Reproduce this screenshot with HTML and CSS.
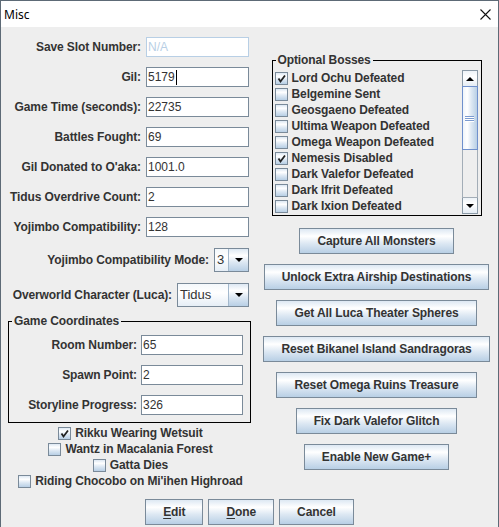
FILE: index.html
```html
<!DOCTYPE html>
<html>
<head>
<meta charset="utf-8">
<title>Misc</title>
<link rel="stylesheet" href="styles.css">
</head>
<body>
<div class="window">
  <div class="titlebar">
    <span class="title">Misc</span>
    <svg class="close" width="11" height="11" viewBox="0 0 11 11"><path d="M0.5 0.5 L10.5 10.5 M10.5 0.5 L0.5 10.5" stroke="#111" stroke-width="1.1" fill="none"/></svg>
  </div>
  <div class="main">
    <div class="left">
      <div class="fields">
        <div class="row"><span class="lbl">Save Slot Number:</span><div class="field disabled">N/A</div></div>
        <div class="row"><span class="lbl">Gil:</span><div class="field">5179<span class="caret"></span></div></div>
        <div class="row"><span class="lbl">Game Time (seconds):</span><div class="field">22735</div></div>
        <div class="row"><span class="lbl">Battles Fought:</span><div class="field">69</div></div>
        <div class="row"><span class="lbl">Gil Donated to O'aka:</span><div class="field">1001.0</div></div>
        <div class="row"><span class="lbl">Tidus Overdrive Count:</span><div class="field">2</div></div>
        <div class="row"><span class="lbl">Yojimbo Compatibility:</span><div class="field">128</div></div>
      </div>
      <div class="combos">
        <div class="row"><span class="lbl">Yojimbo Compatibility Mode:</span>
          <div class="combo combo-small"><span class="combo-value">3</span><span class="combo-btn"><span class="tri"></span></span></div>
        </div>
        <div class="row"><span class="lbl">Overworld Character (Luca):</span>
          <div class="combo combo-wide"><span class="combo-value">Tidus</span><span class="combo-btn"><span class="tri"></span></span></div>
        </div>
      </div>
      <fieldset class="group coords">
        <legend>Game Coordinates</legend>
        <div class="coord-rows">
          <div class="row"><span class="lbl">Room Number:</span><div class="field field-coord">65</div></div>
          <div class="row"><span class="lbl">Spawn Point:</span><div class="field field-coord">2</div></div>
          <div class="row"><span class="lbl">Storyline Progress:</span><div class="field field-coord">326</div></div>
        </div>
      </fieldset>
      <div class="checks">
        <div class="check"><span class="box checked"><svg width="11" height="11" viewBox="0 0 11 11"><path d="M2.5 5.5 L4.5 8.5 L9 2.5" stroke="#222" stroke-width="1.8" fill="none"/></svg></span><span>Rikku Wearing Wetsuit</span></div>
        <div class="check"><span class="box"></span><span>Wantz in Macalania Forest</span></div>
        <div class="check"><span class="box"></span><span>Gatta Dies</span></div>
        <div class="check"><span class="box"></span><span>Riding Chocobo on Mi'ihen Highroad</span></div>
      </div>
    </div>
    <div class="right">
      <fieldset class="group bosses">
        <legend>Optional Bosses</legend>
        <div class="scrollpane">
          <div class="list">
            <div class="check item"><span class="box checked"><svg width="11" height="11" viewBox="0 0 11 11"><path d="M2.5 5.5 L4.5 8.5 L9 2.5" stroke="#222" stroke-width="1.8" fill="none"/></svg></span><span>Lord Ochu Defeated</span></div>
            <div class="check item"><span class="box"></span><span>Belgemine Sent</span></div>
            <div class="check item"><span class="box"></span><span>Geosgaeno Defeated</span></div>
            <div class="check item"><span class="box"></span><span>Ultima Weapon Defeated</span></div>
            <div class="check item"><span class="box"></span><span>Omega Weapon Defeated</span></div>
            <div class="check item"><span class="box checked"><svg width="11" height="11" viewBox="0 0 11 11"><path d="M2.5 5.5 L4.5 8.5 L9 2.5" stroke="#222" stroke-width="1.8" fill="none"/></svg></span><span>Nemesis Disabled</span></div>
            <div class="check item"><span class="box"></span><span>Dark Valefor Defeated</span></div>
            <div class="check item"><span class="box"></span><span>Dark Ifrit Defeated</span></div>
            <div class="check item"><span class="box"></span><span>Dark Ixion Defeated</span></div>
          </div>
          <div class="scrollbar">
            <div class="sb-btn"><span class="tri-up"></span></div>
            <div class="sb-track">
              <div class="sb-thumb"><span class="grip"></span><span class="grip"></span><span class="grip"></span></div>
            </div>
            <div class="sb-btn"><span class="tri"></span></div>
          </div>
        </div>
      </fieldset>
      <div class="actions">
        <button class="btn">Capture All Monsters</button>
        <button class="btn">Unlock Extra Airship Destinations</button>
        <button class="btn">Get All Luca Theater Spheres</button>
        <button class="btn">Reset Bikanel Island Sandragoras</button>
        <button class="btn">Reset Omega Ruins Treasure</button>
        <button class="btn">Fix Dark Valefor Glitch</button>
        <button class="btn">Enable New Game+</button>
      </div>
    </div>
  </div>
  <div class="bottom">
    <button class="btn"><u>E</u>dit</button>
    <button class="btn"><u>D</u>one</button>
    <button class="btn">Cancel</button>
  </div>
</div>
</body>
</html>
```

FILE: styles.css
```css
html, body {
  margin: 0;
  padding: 0;
  background: #eeeeee;
}

.window {
  width: 499px;
  height: 527px;
  box-sizing: border-box;
  border: 1px solid #5d6a76;
  border-bottom: none;
  background: #eeeeee;
  display: flex;
  flex-direction: column;
  overflow: hidden;
  font-family: "Liberation Sans", Arial, sans-serif;
  font-size: 12px;
  color: #333333;
}

.titlebar {
  height: 26px;
  flex: none;
  background: #ffffff;
  display: flex;
  align-items: center;
  justify-content: space-between;
  padding: 0 7px 0 3px;
}

.title {
  font-family: "Noto Sans", "Open Sans", sans-serif;
  font-size: 12px;
  color: #000000;
}

.main {
  display: flex;
  align-items: flex-start;
}

.left {
  width: 259px;
  display: flex;
  flex-direction: column;
}

.right {
  width: 233px;
  display: flex;
  flex-direction: column;
  align-items: center;
}

.lbl, legend, .check, .btn {
  font-weight: bold;
  letter-spacing: -0.1px;
}

.fields {
  padding-top: 10px;
  padding-right: 11px;
  display: flex;
  flex-direction: column;
  gap: 10px;
}

.row {
  display: flex;
  justify-content: flex-end;
  align-items: center;
  gap: 5px;
}

.field {
  width: 103px;
  height: 20px;
  box-sizing: border-box;
  border: 1px solid #7a8a99;
  background: #ffffff;
  padding-left: 1px;
  line-height: 18px;
  white-space: nowrap;
  display: flex;
  align-items: center;
}

.field.disabled {
  border-color: #b8cfe5;
  color: #b8cfe5;
}

.caret {
  display: inline-block;
  width: 1px;
  height: 15px;
  margin-left: 1px;
  background: #000000;
}

.combos {
  margin-top: 11px;
  padding-right: 11px;
  display: flex;
  flex-direction: column;
  gap: 11px;
}

.combo {
  height: 24px;
  box-sizing: border-box;
  border: 1px solid #7a8a99;
  display: flex;
  background: linear-gradient(to bottom, #dde8f3 0%, #ffffff 30%, #dde8f3 60%, #b8cfe5 100%);
  font-weight: normal;
}

.combo-small { width: 35px; }
.combo-wide { width: 72px; }

.combo-value {
  flex: 1;
  padding-left: 2px;
  line-height: 22px;
  border-right: 1px solid #a3b8cc;
  background: linear-gradient(to bottom, #f4f8fb 0%, #ffffff 40%, #e6eef6 100%);
  font-size: 13px;
}

.combo-btn {
  width: 19px;
  display: flex;
  align-items: center;
  justify-content: center;
}

.tri {
  width: 0;
  height: 0;
  border-left: 4.5px solid transparent;
  border-right: 4.5px solid transparent;
  border-top: 4.5px solid #000000;
}

.tri-up {
  width: 0;
  height: 0;
  border-left: 4px solid transparent;
  border-right: 4px solid transparent;
  border-bottom: 4px solid #000000;
}

.group {
  margin: 0;
  padding: 0;
  min-width: 0;
  border: 1px solid #000000;
}

.group legend {
  padding: 0 2px;
  margin-left: 3px;
  line-height: 14px;
  font-size: 12px;
  color: #333333;
}

.coords {
  margin: 7px 0 0 7px;
  width: 243px;
  box-sizing: border-box;
}

.coord-rows {
  padding: 7px 7px 7px 0;
  display: flex;
  flex-direction: column;
  gap: 10px;
}

.coord-rows .row { gap: 4px; }

.field-coord { width: 102px; }

.checks {
  margin-top: 2px;
  display: flex;
  flex-direction: column;
  align-items: center;
}

.check {
  height: 16px;
  display: flex;
  align-items: center;
  gap: 4px;
  white-space: nowrap;
}

.box {
  width: 13px;
  height: 13px;
  box-sizing: border-box;
  border: 1px solid #7a8a99;
  background: linear-gradient(to bottom, #dde8f3 0%, #ffffff 30%, #dde8f3 60%, #b8cfe5 100%);
  display: flex;
  align-items: center;
  justify-content: center;
}

.bosses {
  margin-top: 26px;
  width: 210px;
  box-sizing: border-box;
}

.scrollpane {
  margin: 3px 3px 1px 1px;
  height: 144px;
  display: flex;
}

.list {
  flex: 1;
  padding-left: 1px;
  display: flex;
  flex-direction: column;
}

.scrollbar {
  width: 16px;
  display: flex;
  flex-direction: column;
}

.sb-btn {
  height: 16px;
  flex: none;
  box-sizing: border-box;
  border: 1px solid #8a99a6;
  background: linear-gradient(to bottom, #eef3f8 0%, #ffffff 40%, #e4ecf4 100%);
  display: flex;
  align-items: center;
  justify-content: center;
}

.sb-btn:first-child { border-bottom: none; }
.sb-btn:last-child { border-top: none; }

.sb-track {
  flex: 1;
  border-left: 1px solid #a3adb7;
  border-right: 1px solid #a3adb7;
  border-bottom: 1px solid #a3adb7;
  background: #eeeeee;
  display: flex;
  flex-direction: column;
}

.sb-thumb {
  height: 64px;
  margin: 0 -1px;
  box-sizing: border-box;
  border: 1px solid #6f90cc;
  background: linear-gradient(to right, #eef4fa 0%, #ffffff 30%, #dde8f3 60%, #b8cfe5 100%);
  display: flex;
  flex-direction: column;
  align-items: center;
  justify-content: center;
  gap: 1px;
}

.grip {
  width: 9px;
  height: 1px;
  background: #7b9bd0;
  box-shadow: 0 1px 0 #ffffff;
}

.actions {
  margin-top: 12px;
  display: flex;
  flex-direction: column;
  align-items: center;
  gap: 10px;
}

.btn {
  height: 26px;
  box-sizing: border-box;
  border: 1px solid #7a8a99;
  border-radius: 0;
  padding: 0 17px;
  margin: 0;
  background: linear-gradient(to bottom, #dde8f3 0%, #ffffff 30%, #dde8f3 60%, #b8cfe5 100%);
  font-family: "Liberation Sans", Arial, sans-serif;
  font-size: 12px;
  color: #333333;
  white-space: nowrap;
  line-height: 24px;
}

.btn u {
  text-decoration: underline;
  text-underline-offset: 2px;
}

.bottom {
  margin-top: 10px;
  display: flex;
  justify-content: center;
  gap: 5px;
}
```
